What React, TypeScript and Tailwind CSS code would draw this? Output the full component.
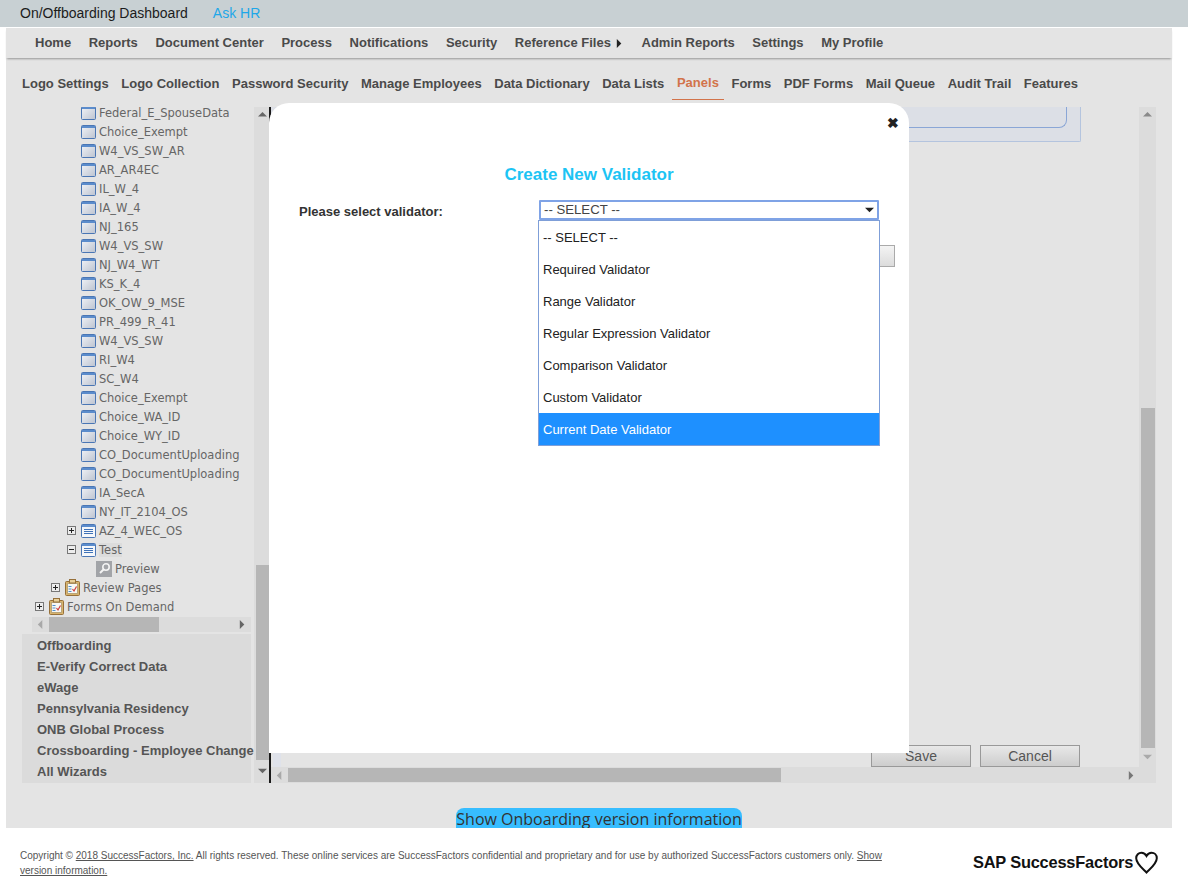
import type { ReactNode } from 'react'

const arial = "font-['Liberation_Sans',Arial,sans-serif]"

const mainMenu = ['Home', 'Reports', 'Document Center', 'Process', 'Notifications', 'Security', 'Reference Files', 'Admin Reports', 'Settings', 'My Profile']
const subMenu = ['Logo Settings', 'Logo Collection', 'Password Security', 'Manage Employees', 'Data Dictionary', 'Data Lists', 'Panels', 'Forms', 'PDF Forms', 'Mail Queue', 'Audit Trail', 'Features']
const forms = ['Federal_E_SpouseData', 'Choice_Exempt', 'W4_VS_SW_AR', 'AR_AR4EC', 'IL_W_4', 'IA_W_4', 'NJ_165', 'W4_VS_SW', 'NJ_W4_WT', 'KS_K_4', 'OK_OW_9_MSE', 'PR_499_R_41', 'W4_VS_SW', 'RI_W4', 'SC_W4', 'Choice_Exempt', 'Choice_WA_ID', 'Choice_WY_ID', 'CO_DocumentUploading', 'CO_DocumentUploading', 'IA_SecA', 'NY_IT_2104_OS']
const wizards = ['Offboarding', 'E-Verify Correct Data', 'eWage', 'Pennsylvania Residency', 'ONB Global Process', 'Crossboarding - Employee Change', 'All Wizards']
const validators = ['-- SELECT --', 'Required Validator', 'Range Validator', 'Regular Expression Validator', 'Comparison Validator', 'Custom Validator', 'Current Date Validator']

function Arrow({ dir, className = 'fill-[#8a8a8a]' }: { dir: 'up' | 'down' | 'left' | 'right'; className?: string }) {
  const points = { up: '0,6 5,1 10,6', down: '0,2 10,2 5,7', left: '7,0 7,10 2,5', right: '2,0 2,10 7,5' }[dir]
  return (
    <svg width="9" height="9" viewBox="0 0 10 10" className={className}>
      <polygon points={points} />
    </svg>
  )
}

function FormIcon({ lines = false }: { lines?: boolean }) {
  return (
    <svg width="15" height="14" viewBox="0 0 15 14" className="shrink-0">
      <defs>
        <linearGradient id="pane" x1="0" y1="0" x2="1" y2="1">
          <stop offset="0" stopColor="#f2f4f8" />
          <stop offset="1" stopColor="#bcc3d0" />
        </linearGradient>
      </defs>
      <rect x="0.5" y="0.5" width="14" height="13" rx="1" fill={lines ? '#f4f7fb' : 'url(#pane)'} stroke="#4a76b4" />
      <rect x="1" y="1" width="13" height="2" fill="#5b8ccc" />
      {lines && <path d="M3 5.5h9M3 7.5h9M3 9.5h9" stroke="#3f72b8" strokeWidth="1" />}
    </svg>
  )
}

function Clipboard() {
  return (
    <svg width="15" height="17" viewBox="0 0 15 17" className="shrink-0">
      <rect x="0.5" y="2.5" width="14" height="14" rx="1" fill="#d8b36c" stroke="#96703a" />
      <rect x="2.5" y="4.5" width="10" height="10" fill="#f7f7f4" stroke="#b9a57a" />
      <rect x="4.5" y="0.5" width="6" height="3.5" fill="#e8cf98" stroke="#96703a" />
      <path d="M3.5 7.5h3M3.5 10h3M3.5 12.5h3" stroke="#4f8ed0" />
      <path d="M7.5 10l1.5 2 2.5-4.5" fill="none" stroke="#cf3a3a" strokeWidth="1.2" />
    </svg>
  )
}

function Magnifier() {
  return (
    <span className="flex size-[16px] shrink-0 items-center justify-center bg-[#a2a4a8]">
      <svg width="13" height="13" viewBox="0 0 13 13" fill="none" stroke="#f4f4f4">
        <circle cx="8" cy="5" r="3.2" strokeWidth="1.6" />
        <path d="M5.5 7.5L2 11" strokeWidth="2" />
      </svg>
    </span>
  )
}

function Toggle({ open = false }: { open?: boolean }) {
  return (
    <svg width="9" height="9" viewBox="0 0 9 9" className="shrink-0">
      <rect x="0.5" y="0.5" width="8" height="8" fill="#ececec" stroke="#777" />
      <path d={open ? 'M2 4.5h5' : 'M2 4.5h5M4.5 2v5'} stroke="#222" />
    </svg>
  )
}

function TreeRow({ pad, icon, toggle, children }: { pad: string; icon: ReactNode; toggle?: ReactNode; children: ReactNode }) {
  return (
    <div className={`flex h-[19px] items-center whitespace-nowrap ${pad}`}>
      {toggle && <span className="mr-[5px] flex">{toggle}</span>}
      {icon}
      <span className="ml-[3px] pt-[2px]">{children}</span>
    </div>
  )
}

function Tree() {
  return (
    <div className="-mt-[4px] font-['DejaVu_Sans',sans-serif] text-[11.5px] text-[#666]">
      {forms.map((name, i) => (
        <TreeRow key={i} pad="pl-[59px]" icon={<FormIcon />}>{name}</TreeRow>
      ))}
      <TreeRow pad="pl-[45px]" toggle={<Toggle />} icon={<FormIcon lines />}>AZ_4_WEC_OS</TreeRow>
      <TreeRow pad="pl-[45px]" toggle={<Toggle open />} icon={<FormIcon lines />}>
        <span className="bg-[#dcdcdc]">Test</span>
      </TreeRow>
      <TreeRow pad="pl-[74px]" icon={<Magnifier />}>Preview</TreeRow>
      <TreeRow pad="pl-[29px]" toggle={<Toggle />} icon={<Clipboard />}>Review Pages</TreeRow>
      <TreeRow pad="pl-[13px]" toggle={<Toggle />} icon={<Clipboard />}>Forms On Demand</TreeRow>
    </div>
  )
}

function ValidatorModal() {
  return (
    <div className={`absolute left-[263px] top-[76px] z-10 h-[650px] w-[640px] rounded-t-[20px] bg-white ${arial}`}>
      <span className="absolute right-[10px] top-[12px] text-[14px] font-bold leading-[16px] text-[#222]">✖</span>
      <h2 className="pt-[61px] text-center text-[17px] font-bold leading-[22px] text-[#1cc4f4]">Create New Validator</h2>
      <div className="mt-[14px] flex pl-[30px]">
        <label className="w-[240px] pt-[4px] text-[13px] font-bold leading-[16px] text-[#333]">Please select validator:</label>
        <div className="relative">
          <div className="flex h-[20px] w-[340px] items-center justify-between rounded-[1px] border-2 border-[#7fa3e6] px-[3px] text-[13.2px] text-[#444]">
            <span>-- SELECT --</span>
            <Arrow dir="down" className="fill-[#222]" />
          </div>
          <ul className="absolute -left-px top-[20px] z-20 w-[342px] border border-[#7f9fd8] bg-white text-[13px] text-[#222]">
            {validators.map((v, i) => (
              <li key={v} className={`flex h-[32px] items-center pl-[4px] pt-[2px] ${i === 6 ? 'bg-[#1e90ff] text-white' : ''}`}>
                {v}
              </li>
            ))}
          </ul>
        </div>
      </div>
      <div className="ml-auto mr-[14px] mt-[25px] h-[22px] w-[100px] border border-[#aaa] bg-gradient-to-b from-[#f4f4f4] to-[#dcdcdc]" />
    </div>
  )
}

export default function App() {
  return (
    <div className={`relative h-[889px] w-[1188px] overflow-hidden bg-white ${arial}`}>
      <header className="flex h-[27px] items-center gap-[25px] bg-[#c8d0d3] pl-[20px] text-[14px]">
        <span className="text-[#1c1c1c]">On/Offboarding Dashboard</span>
        <a className="text-[#1ea7e8]">Ask HR</a>
      </header>

      <div className="relative ml-[6px] h-[801px] w-[1166px] bg-[#e4e4e4]">
        <div className="h-px bg-white" />
        <nav className="flex h-[30px] items-center gap-[17.6px] pl-[29px] text-[13px] font-bold text-[#4a4a4a] shadow-[0_2px_2px_-1px_rgba(0,0,0,0.35)]">
          {mainMenu.map((m) => (
            <span key={m} className="flex items-center gap-[4px]">
              {m}
              {m === 'Reference Files' && <Arrow dir="right" className="fill-[#222]" />}
            </span>
          ))}
        </nav>

        <nav className="flex h-[41px] gap-[2.6px] pl-[11px] pt-[8px] text-[13px] font-bold text-[#4a4a4a]">
          {subMenu.map((m) => (
            <span key={m} className={`flex h-[34px] items-center px-[5px] pt-[1px] ${m === 'Panels' ? 'border-b border-[#d2734a] text-[#d2734a]' : ''}`}>
              {m}
            </span>
          ))}
        </nav>

        <div className="ml-[16px] mt-[8px] flex h-[676px] w-[1134px]">
          <div className="w-[232px]">
            <div className="h-[510px] overflow-hidden">
              <Tree />
            </div>
            <div className="relative ml-[10px] flex h-[15px] w-[219px] items-center justify-between bg-[#dcdcdc] px-[4px]">
              <Arrow dir="left" className="fill-[#a8a8a8]" />
              <div className="absolute left-[17px] top-0 h-[15px] w-[110px] bg-[#b6b6b6]" />
              <Arrow dir="right" className="fill-[#666]" />
            </div>
            <ul className="mt-[2px] h-[149px] w-[229px] whitespace-nowrap bg-[#dbdbdb] pl-[15px] pt-[1px] text-[13px] font-bold text-[#555]">
              {wizards.map((w) => (
                <li key={w} className="flex h-[21px] items-center">{w}</li>
              ))}
            </ul>
          </div>

          <div className="flex w-[15px] flex-col items-center bg-[#dcdcdc] pl-[2px]">
            <div className="flex h-[16px] items-center"><Arrow dir="up" className="fill-[#666]" /></div>
            <div className="mt-[442px] h-[195px] w-[13px] bg-[#b6b6b6]" />
            <div className="flex flex-1 items-center"><Arrow dir="down" className="fill-[#666]" /></div>
          </div>

          <div className="flex flex-1 flex-col border-l-2 border-[#1a1a1a]">
            <div className="flex h-[660px]">
              <div className="flex flex-1 flex-col">
                <div className="mr-[58px] h-[35px] rounded-br-[2px] border-b border-r border-[#b4c4de] bg-[#dcdfe6]">
                  <div className="mr-[13px] h-[21px] rounded-br-[8px] border-b border-r border-[#8aa6d6]" />
                </div>
                <div className="mt-auto flex items-end">
                  <div className="ml-[2px] h-[14px] w-[8px] bg-[#dfe2ea]" />
                  <div className="ml-auto mr-[59px] flex gap-[9px] text-[14px] text-[#555]">
                    <button className="h-[22px] w-[100px] border border-[#999] bg-gradient-to-b from-[#e8e8e8] to-[#cdcdcd]">Save</button>
                    <button className="h-[22px] w-[100px] border border-[#999] bg-gradient-to-b from-[#e8e8e8] to-[#cdcdcd]">Cancel</button>
                  </div>
                </div>
              </div>
              <div className="flex w-[17px] flex-col items-center bg-[#dcdcdc]">
                <div className="flex h-[16px] items-center"><Arrow dir="up" className="fill-[#8a8a8a]" /></div>
                <div className="mt-[285px] h-[340px] w-[14px] bg-[#b6b6b6]" />
                <div className="flex flex-1 items-center"><Arrow dir="down" className="fill-[#aaa]" /></div>
              </div>
            </div>
            <div className="flex h-[16px] items-center bg-[#dcdcdc]">
              <div className="flex w-[17px] justify-center"><Arrow dir="left" className="fill-[#a8a8a8]" /></div>
              <div className="h-[14px] w-[493px] bg-[#b6b6b6]" />
              <div className="ml-[346px] flex"><Arrow dir="right" className="fill-[#777]" /></div>
            </div>
          </div>
        </div>

        <div className="mt-[25px] flex justify-center">
          <span className="ml-[20px] h-[20px] w-[286px] overflow-hidden whitespace-nowrap rounded-t-[8px] bg-[#37bdff] text-center font-['Open_Sans',sans-serif] text-[16px] leading-[22px] text-[#333]">
            Show Onboarding version information
          </span>
        </div>

        <ValidatorModal />
      </div>

      <footer className="flex items-start pl-[20px] pt-[20px]">
        <p className="w-[866px] text-[10px] leading-[15px] text-[#555]">
          Copyright © <a className="underline">2018 SuccessFactors, Inc.</a> All rights reserved. These online services are SuccessFactors confidential and proprietary and for use by authorized SuccessFactors customers only. <a className="underline">Show version information.</a>
        </p>
        <div className="ml-[87px] mt-[2px] flex items-center gap-[2px] text-[16.4px] font-bold leading-[24px] text-[#111]">
          <span className="tracking-[-0.2px]">SAP SuccessFactors</span>
          <svg width="23" height="23" viewBox="0 0 23 23" fill="none" stroke="#111" strokeWidth="2">
            <path d="M11.5 21.5C7 17 1.2 12.5 1.2 7.2 1.2 4 3.6 1.8 6.4 1.8c2.2 0 4 1.2 5.1 3.2 1.1-2 2.9-3.2 5.1-3.2 2.8 0 5.2 2.2 5.2 5.4 0 5.3-5.8 9.8-10.3 14.3z" />
          </svg>
        </div>
      </footer>
    </div>
  )
}
